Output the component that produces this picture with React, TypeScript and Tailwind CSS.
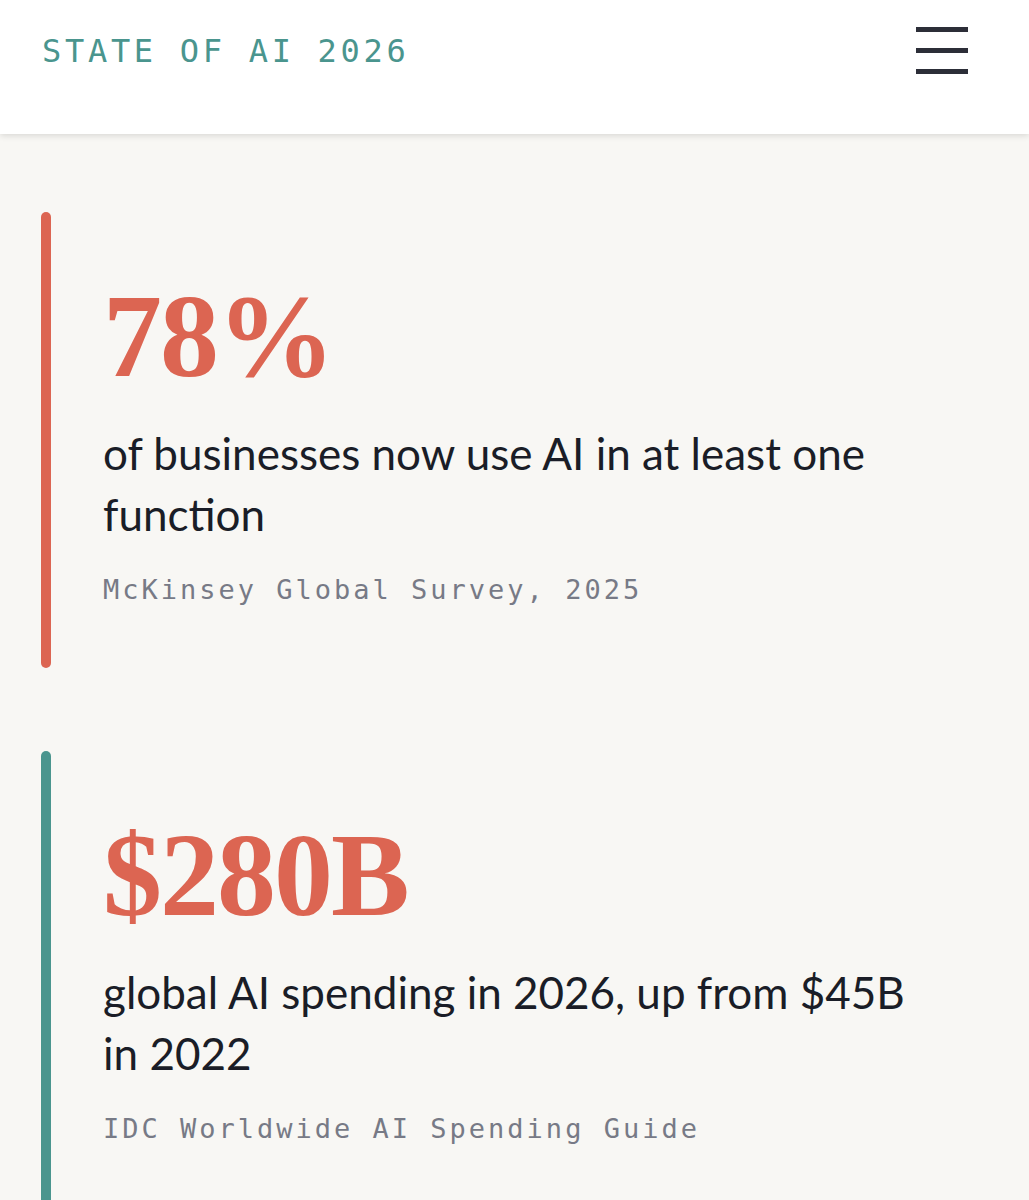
import React from 'react';

interface Stat {
  value: string;
  label: string;
  source: string;
  accent: string;
}

const stats: Stat[] = [
  {
    value: '78%',
    label: 'of businesses now use AI in at least one function',
    source: 'McKinsey Global Survey, 2025',
    accent: 'bg-[#dc6552]',
  },
  {
    value: '$280B',
    label: 'global AI spending in 2026, up from $45B in 2022',
    source: 'IDC Worldwide AI Spending Guide',
    accent: 'bg-[#4a958e]',
  },
];

const StatCard: React.FC<{ stat: Stat }> = ({ stat }) => (
  <div className="flex gap-[52px]">
    <div className={`w-[10px] shrink-0 rounded-full ${stat.accent}`} />
    <div className="pt-[66px] pb-[58px]">
      <div className="font-['Liberation_Serif',serif] text-[118px] font-bold leading-[118px] tracking-[-2px] text-[#dc6552]">
        {stat.value}
      </div>
      <p className="mt-[27px] w-[815px] font-['Lato',sans-serif] text-[44px] leading-[61px] text-[#1a1d27]">
        {stat.label}
      </p>
      <div className="mt-[25px] font-['DejaVu_Sans_Mono',monospace] text-[27px] leading-[40px] tracking-[3px] text-[#777a86]">
        {stat.source}
      </div>
    </div>
  </div>
);

export default function App() {
  return (
    <div className="min-h-[1200px] bg-[#f8f7f4]">
      <header className="flex h-[134px] items-start justify-between bg-white pl-[42px] pr-[61px] shadow-[0_2px_6px_rgba(0,0,0,0.12)]">
        <div className="mt-[31px] font-['DejaVu_Sans_Mono',monospace] text-[32px] leading-[40px] tracking-[3.7px] text-[#4a958e]">
          STATE OF AI 2026
        </div>
        <button className="mt-[27px] flex w-[52px] flex-col gap-[16px]" aria-label="Menu">
          <span className="h-[5px] w-full bg-[#2c2e38]" />
          <span className="h-[5px] w-full bg-[#2c2e38]" />
          <span className="h-[5px] w-full bg-[#2c2e38]" />
        </button>
      </header>
      <main className="flex flex-col gap-[83px] pl-[41px] pt-[78px]">
        {stats.map((s) => (
          <StatCard key={s.value} stat={s} />
        ))}
      </main>
    </div>
  );
}
